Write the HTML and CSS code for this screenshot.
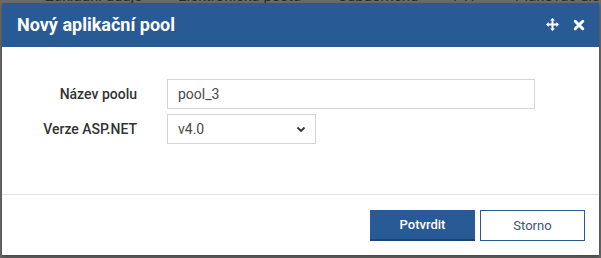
FILE: index.html
```html
<!DOCTYPE html>
<html lang="cs">
<head>
<meta charset="utf-8">
<link rel="stylesheet" href="styles.css">
</head>
<body>
<div class="backdrop">
  <div class="tabs">
    <span class="t1">Základní údaje</span>
    <span class="t2">Elektronická pošta</span>
    <span class="t3">Subdoménu</span>
    <span class="t4">FTP</span>
    <span class="t5">Plánovač úloh</span>
  </div>
</div>
<div class="dialog">
  <div class="header">
    <h1 class="title">Nový aplikační pool</h1>
    <div class="tools">
      <svg class="ico" width="13" height="13" viewBox="0 0 16 16"><path fill="#fff" d="M8 0 L11 3.2 H9.2 V6.8 H12.8 V5 L16 8 L12.8 11 V9.2 H9.2 V12.8 H11 L8 16 L5 12.8 H6.8 V9.2 H3.2 V11 L0 8 L3.2 5 V6.8 H6.8 V3.2 H5 Z"/></svg>
      <svg class="ico" width="12" height="12" viewBox="0 0 16 16"><path stroke="#fff" stroke-width="4" stroke-linecap="round" d="M3 3 L13 13 M13 3 L3 13"/></svg>
    </div>
  </div>
  <div class="body">
    <div class="row">
      <label class="label">Název poolu</label>
      <div class="input">pool_3</div>
    </div>
    <div class="row">
      <label class="label">Verze ASP.NET</label>
      <div class="select"><span>v4.0</span>
        <svg width="10" height="7" viewBox="0 0 10 7"><path d="M1.5 1.5 L5 5 L8.5 1.5" fill="none" stroke="#333" stroke-width="1.8"/></svg>
      </div>
    </div>
  </div>
  <div class="footer">
    <button class="btn primary">Potvrdit</button>
    <button class="btn secondary">Storno</button>
  </div>
</div>
</body>
</html>
```
FILE: styles.css
```css
html, body { margin: 0; padding: 0; }
body {
  width: 601px; height: 258px; overflow: hidden;
  background: #6c6c6c;
  font-family: Roboto, "Liberation Sans", sans-serif;
  position: relative;
}
.backdrop { position: absolute; left: 0; top: -13px; width: 601px; }
.tabs { display: flex; font-size: 15px; color: #2c2c2c; white-space: nowrap; }
.tabs span { position: absolute; top: 0; }
.t1 { left: 45px; } .t2 { left: 178px; } .t3 { left: 338px; } .t4 { left: 453px; } .t5 { left: 515px; }
.dialog {
  position: absolute; left: 2px; top: 3px; width: 597px; height: 252px;
  background: #fff; display: flex; flex-direction: column;
  box-shadow: 0 2px 4px rgba(0,0,0,0.4);
}
.header {
  height: 44px; background: #285a95; display: flex; align-items: center;
  justify-content: space-between; padding: 0 15px 1px; box-sizing: border-box;
}
.title { margin: 0; font-size: 18px; font-weight: 700; color: #fff; }
.tools { display: flex; gap: 14px; align-items: center; margin-right: -1px; }
.ico { display: block; }
.body { padding: 32px 0 0; flex: 1; border-bottom: 1px solid #e3e3e3; display: flex; flex-direction: column; gap: 5px; }
.row { display: flex; align-items: center; }
.label { width: 135px; text-align: right; font-size: 14px; font-weight: 500; color: #333; margin-right: 30px; }
.input {
  width: 368px; height: 30px; box-sizing: border-box; border: 1px solid #d4d4d4;
  padding: 0 10px; display: flex; align-items: center; font-size: 14px; color: #4a4a4a;
}
.select {
  width: 149px; height: 30px; box-sizing: border-box; border: 1px solid #d4d4d4;
  padding: 0 9px 0 10px; display: flex; align-items: center; justify-content: space-between;
  font-size: 14px; color: #4a4a4a;
}
.footer { height: 60px; display: flex; justify-content: flex-end; align-items: flex-start; padding: 15px 14px 0 0; gap: 5px; box-sizing: border-box; }
.btn { width: 105px; height: 31px; font-family: inherit; font-size: 13px; font-weight: 500; box-sizing: border-box; padding: 0; }
.primary { background: #285a95; color: #fff; border: none; border-bottom: 2px solid #1d4470; }
.secondary { background: #fff; color: #3a5578; border: 1px solid #285a95; font-weight: 400; }
```
